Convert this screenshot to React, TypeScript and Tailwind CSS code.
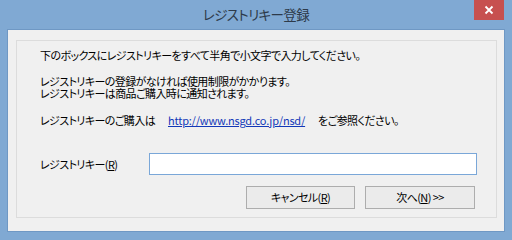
export default function App() {
  const jp = "[font-family:'Noto_Sans_CJK_JP','Noto_Sans',sans-serif] [font-feature-settings:'palt']";
  return (
    <div className={`w-[512px] h-[240px] bg-[#80a9d3] flex flex-col text-[11px] tracking-[-0.6px] text-black ${jp}`}>
      {/* title bar */}
      <div className="relative h-[29px] flex items-center justify-center">
        <span className="text-[13.5px] tracking-[-0.6px] text-[#2d3a4a] mt-[-1px]">レジストリキー登録</span>
        <div className="absolute right-[8px] top-0 w-[30px] h-[20px] bg-[#c7504f] flex items-center justify-center">
          <svg width="10" height="10" viewBox="0 0 10 10">
            <path d="M1.5 1.5 L8.5 8.5 M8.5 1.5 L1.5 8.5" stroke="#fff" strokeWidth="1.8" />
          </svg>
        </div>
      </div>

      {/* client area */}
      <div className="flex-1 mx-[7px] mb-[8px] bg-[#f0f0f0] border border-[#6f98c4] flex">
        <div className="flex-1 mt-[10px] ml-[8px] mr-[7px] mb-[13px] border border-[#dcdcdc] flex flex-col pl-[23px] whitespace-nowrap">
          <div className="mt-[8px] leading-[12px] h-[12px]">
            下のボックスにレジストリキーをすべて半角で小文字で入力してください。
          </div>
          <div className="mt-[14px] leading-[12px]">
            <div>レジストリキーの登録がなければ使用制限がかかります。</div>
            <div>レジストリキーは商品ご購入時に通知されます。</div>
          </div>
          <div className="mt-[15px] leading-[12px] h-[12px] flex">
            <span className="w-[128px]">レジストリキーのご購入は</span>
            <span className="w-[150px]">
              <span className="text-[#1238b8] underline underline-offset-1 tracking-[-0.2px]">http://www.nsgd.co.jp/nsd/</span>
            </span>
            <span>をご参照ください。</span>
          </div>

          <div className="mt-[27px] flex items-center pr-[19px]">
            <span className="w-[109px]">
              レジストリキー(<span className="underline">R</span>)
            </span>
            <input
              type="text"
              className="flex-1 h-[22px] bg-white border border-[#7aa7d8] outline-none px-1"
            />
          </div>

          <div className="mt-[11px] flex justify-end gap-[10px] pr-[21px]">
            <button className="w-[109px] h-[23px] border border-[#adadad] bg-[#ebebeb] flex items-center justify-center">
              キャンセル(<span className="underline">R</span>)
            </button>
            <button className="w-[110px] h-[23px] border border-[#adadad] bg-[#ebebeb] flex items-center justify-center">
              次へ(<span className="underline">N</span>)&nbsp;&gt;&gt;
            </button>
          </div>
        </div>
      </div>
    </div>
  );
}
